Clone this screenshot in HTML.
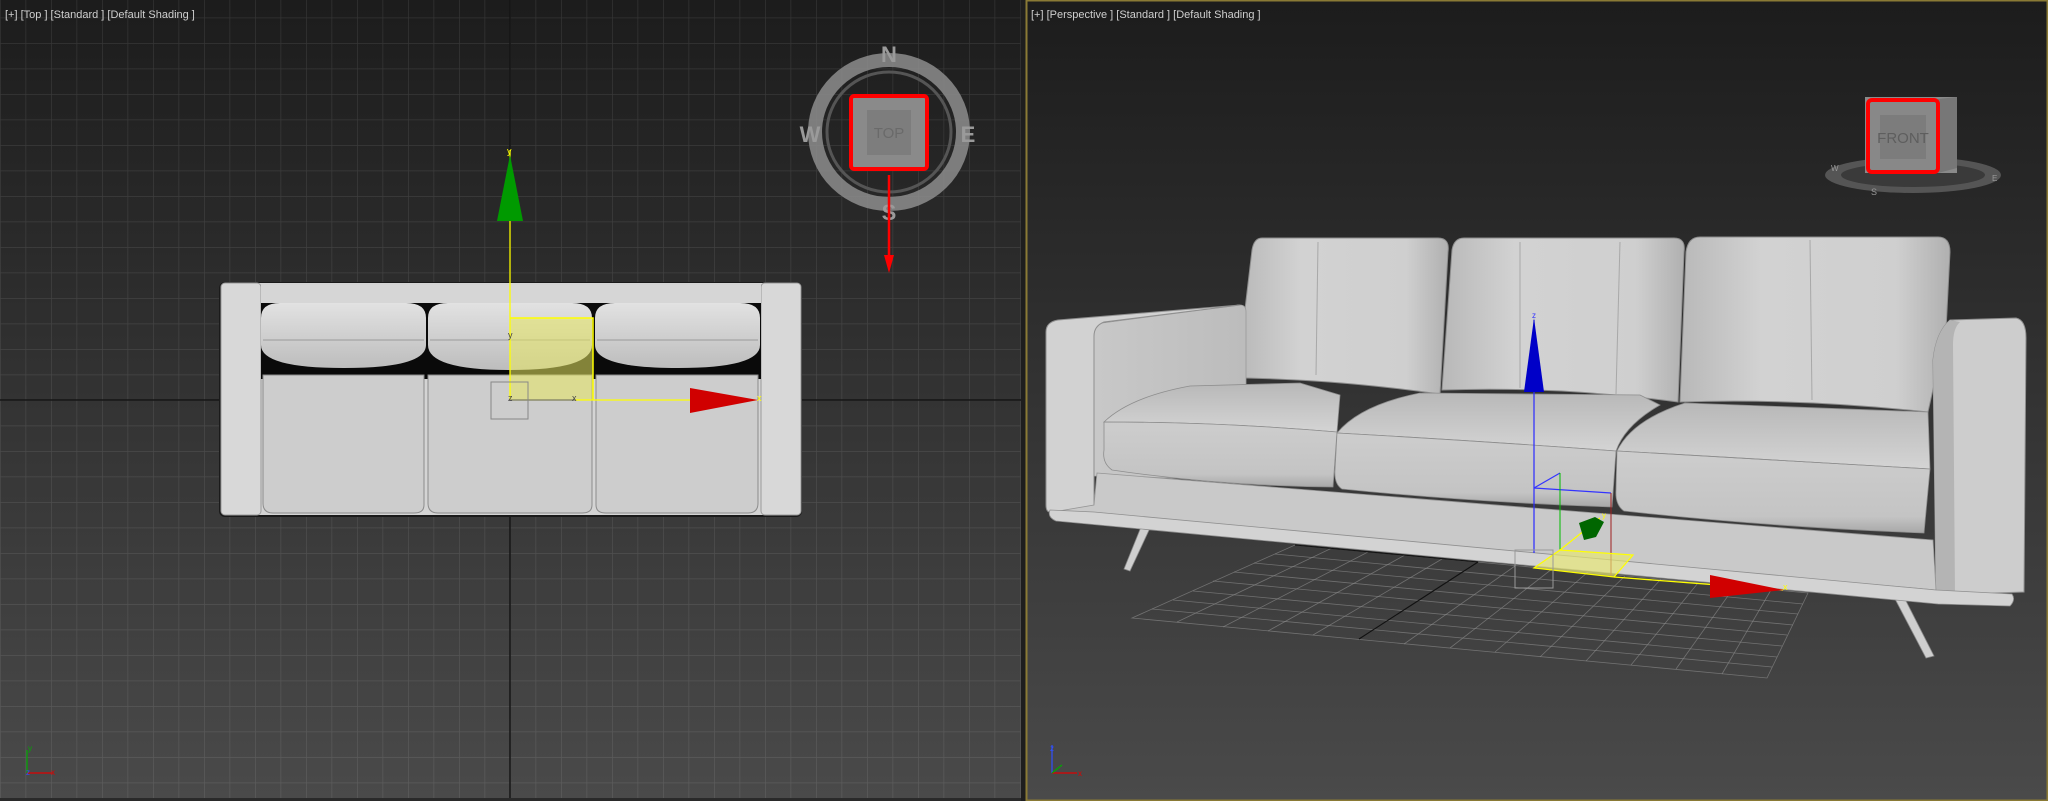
<!DOCTYPE html>
<html><head><meta charset="utf-8"><style>
html,body{margin:0;padding:0;background:#1a1a1a;width:2048px;height:801px;overflow:hidden}
svg{display:block}
text{font-family:"Liberation Sans",sans-serif}
</style></head><body>
<svg width="2048" height="801" viewBox="0 0 2048 801" xmlns="http://www.w3.org/2000/svg">
<defs>
<linearGradient id="bgL" x1="0" y1="0" x2="0" y2="1"><stop offset="0" stop-color="#1c1c1c"/><stop offset="1" stop-color="#4a4a4a"/></linearGradient>
<linearGradient id="bgR" x1="0" y1="0" x2="0" y2="1"><stop offset="0" stop-color="#1c1c1c"/><stop offset="1" stop-color="#4a4a4a"/></linearGradient>
<pattern id="grid" x="0" y="0" width="25.5" height="25.5" patternUnits="userSpaceOnUse" patternTransform="translate(510 400)">
<path d="M0 0H25.5M0 0V25.5" stroke="#ffffff" stroke-opacity="0.1" stroke-width="1.4" fill="none"/>
</pattern>
<linearGradient id="cush" x1="0" y1="0" x2="0" y2="1"><stop offset="0" stop-color="#e2e2e2"/><stop offset="1" stop-color="#bdbdbd"/></linearGradient>
<linearGradient id="cushH" x1="0" y1="0" x2="1" y2="0"><stop offset="0" stop-color="#b8b8b8"/><stop offset="0.3" stop-color="#d2d2d2"/><stop offset="0.8" stop-color="#cfcfcf"/><stop offset="1" stop-color="#b0b0b0"/></linearGradient>
<linearGradient id="seatT" x1="0" y1="0" x2="0" y2="1"><stop offset="0" stop-color="#b8b8b8"/><stop offset="1" stop-color="#d4d4d4"/></linearGradient>
<linearGradient id="seatF" x1="0" y1="0" x2="0" y2="1"><stop offset="0" stop-color="#cdcdcd"/><stop offset="0.8" stop-color="#c4c4c4"/><stop offset="1" stop-color="#a8a8a8"/></linearGradient>
<linearGradient id="armI" x1="0" y1="0" x2="1" y2="0"><stop offset="0" stop-color="#c8c8c8"/><stop offset="1" stop-color="#bcbcbc"/></linearGradient>
</defs>

<!-- LEFT VIEWPORT -->
<rect x="0" y="0" width="1021" height="801" fill="url(#bgL)"/>
<rect x="0" y="0" width="1021" height="801" fill="url(#grid)"/>
<line x1="510" y1="0" x2="510" y2="801" stroke="#151515" stroke-width="1.5"/>
<line x1="0" y1="400" x2="1021" y2="400" stroke="#151515" stroke-width="1.5"/>
<text x="5" y="18" font-size="11" fill="#cfcfcf">[+] [Top ] [Standard ] [Default Shading ]</text>

<!-- top sofa -->
<rect x="219" y="282" width="583" height="235" rx="6" fill="#1a1a1a"/>
<rect x="221" y="283" width="580" height="232" rx="5" fill="#d4d4d4"/>
<rect x="221" y="283" width="40" height="232" rx="4" fill="#d8d8d8" stroke="#9a9a9a" stroke-width="1"/>
<rect x="761" y="283" width="40" height="232" rx="4" fill="#d8d8d8" stroke="#9a9a9a" stroke-width="1"/>
<rect x="261" y="285" width="500" height="20" fill="#d6d6d6"/>
<rect x="261" y="303" width="500" height="76" fill="#0a0a0a"/>
<g fill="#cdcdcd" stroke="#8c8c8c" stroke-width="1">
<path d="M263 375 H424 V505 Q424 513 414 513 H273 Q263 513 263 503Z"/>
<path d="M428 375 H592 V505 Q592 513 582 513 H438 Q428 513 428 503Z"/>
<path d="M596 375 H758 V503 Q758 513 748 513 H606 Q596 513 596 505Z"/>
</g>
<g fill="url(#cush)">
<path d="M261 318 Q261 303 280 303 H406 Q426 303 426 318 V345 Q426 368 344 368 Q261 368 261 345Z"/>
<path d="M428 318 Q428 303 448 303 H572 Q592 303 592 318 V345 Q592 370 510 370 Q428 370 428 345Z"/>
<path d="M595 318 Q595 303 615 303 H740 Q760 303 760 318 V345 Q760 368 678 368 Q595 368 595 345Z"/>
</g>
<g stroke="#9a9a9a" stroke-width="1"><line x1="263" y1="340" x2="424" y2="340"/><line x1="430" y1="340" x2="590" y2="340"/><line x1="597" y1="340" x2="758" y2="340"/></g>

<!-- top gizmo -->
<rect x="510" y="318" width="83" height="82" fill="#e8e860" fill-opacity="0.55"/>
<path d="M510 318H593V400" stroke="#ffff00" stroke-width="1.5" fill="none"/>
<line x1="510" y1="150" x2="510" y2="400" stroke="#ffff00" stroke-width="1.3"/>
<line x1="510" y1="400" x2="755" y2="400" stroke="#ffff00" stroke-width="1.3"/>
<line x1="510" y1="400" x2="575" y2="400" stroke="#777" stroke-width="1.3"/>
<polygon points="510,155 497,221 523,221" fill="#009a00"/>
<polygon points="690,388 690,413 758,400" fill="#d00000"/>
<rect x="491" y="382" width="37" height="37" fill="none" stroke="#888" stroke-width="1"/>
<text x="507" y="154" font-size="9" fill="#ffff00">y</text>
<text x="508" y="338" font-size="9" fill="#444">y</text>
<text x="508" y="401" font-size="9" fill="#444">z</text>
<text x="572" y="401" font-size="9" fill="#444">x</text>
<text x="757" y="401" font-size="9" fill="#ffff00">x</text>

<!-- compass -->
<ellipse cx="889" cy="132" rx="74" ry="72" fill="none" stroke="#8d8d8d" stroke-width="14" stroke-opacity="0.85"/>
<ellipse cx="889" cy="132" rx="62" ry="60" fill="none" stroke="#555" stroke-width="3"/>
<text x="889" y="62" font-size="22" font-weight="bold" fill="#9a9a9a" text-anchor="middle">N</text>
<text x="810" y="142" font-size="22" font-weight="bold" fill="#9a9a9a" text-anchor="middle">W</text>
<text x="968" y="142" font-size="22" font-weight="bold" fill="#9a9a9a" text-anchor="middle">E</text>
<text x="889" y="220" font-size="22" font-weight="bold" fill="#9a9a9a" text-anchor="middle">S</text>
<rect x="851" y="96" width="76" height="73" rx="3" fill="#8a8a8a" stroke="#ff0000" stroke-width="4"/>
<rect x="867" y="110" width="44" height="45" fill="#7d7d7d"/>
<text x="889" y="138" font-size="15" fill="#6a6a6a" text-anchor="middle">TOP</text>
<line x1="889" y1="175" x2="889" y2="262" stroke="#ff0000" stroke-width="2.5"/>
<polygon points="884,255 894,255 889,273" fill="#ff0000"/>

<!-- left axis tripod -->
<line x1="27" y1="750" x2="27" y2="773" stroke="#00aa00" stroke-width="1.2"/>
<line x1="27" y1="773" x2="52" y2="773" stroke="#dd0000" stroke-width="1.2"/>
<text x="28" y="751" font-size="8" fill="#00aa00">y</text>
<text x="26" y="775" font-size="8" fill="#3050ff">z</text>
<text x="51" y="775" font-size="8" fill="#dd0000">x</text>
<rect x="0" y="798" width="1021" height="3" fill="#2a2a2a"/>

<!-- divider -->
<rect x="1021" y="0" width="5" height="801" fill="#1e1e1e"/>

<!-- RIGHT VIEWPORT -->
<rect x="1026" y="0" width="1022" height="801" fill="url(#bgR)"/>
<rect x="1026.5" y="0.5" width="1021" height="800" fill="none" stroke="#8a7a35" stroke-width="2"/>
<text x="1031" y="18" font-size="11" fill="#cfcfcf">[+] [Perspective ] [Standard ] [Default Shading ]</text>

<!-- floor grid -->
<g stroke="#8c8c8c" stroke-width="0.8" stroke-opacity="0.65" fill="none">
<polygon points="1295,545 1808,593 1767,678 1132,618"/>
<line x1="1275" y1="554" x2="1803" y2="604"/><line x1="1254" y1="563" x2="1798" y2="614"/><line x1="1234" y1="572" x2="1793" y2="625"/><line x1="1213" y1="581" x2="1787" y2="635"/><line x1="1193" y1="591" x2="1782" y2="646"/><line x1="1173" y1="600" x2="1777" y2="657"/><line x1="1152" y1="609" x2="1772" y2="667"/>
<line x1="1332" y1="548" x2="1177" y2="622"/><line x1="1368" y1="552" x2="1223" y2="627"/><line x1="1405" y1="555" x2="1268" y2="631"/><line x1="1442" y1="559" x2="1313" y2="635"/><line x1="1515" y1="566" x2="1404" y2="644"/><line x1="1552" y1="569" x2="1450" y2="648"/><line x1="1588" y1="572" x2="1495" y2="652"/><line x1="1625" y1="576" x2="1540" y2="657"/><line x1="1661" y1="579" x2="1586" y2="661"/><line x1="1698" y1="583" x2="1631" y2="665"/><line x1="1735" y1="586" x2="1676" y2="669"/><line x1="1771" y1="590" x2="1722" y2="674"/>
</g>
<line x1="1478" y1="562" x2="1359" y2="639" stroke="#111" stroke-width="1.1"/>
<line x1="1295" y1="545" x2="1478" y2="562" stroke="#111" stroke-width="1.1"/>

<!-- legs -->
<polygon points="1141,527 1150,528 1130,571 1124,569" fill="#cfcfcf" stroke="#8a8a8a" stroke-width="0.8"/>
<polygon points="1894,597 1904,597 1934,656 1926,658" fill="#cfcfcf" stroke="#8a8a8a" stroke-width="0.8"/>

<!-- back cushions -->
<path d="M1262 238 L1438 238 Q1450 238 1448 252 L1440 394 Q1340 380 1246 378 Q1236 378 1238 368 L1252 250 Q1254 238 1262 238Z" fill="url(#cushH)" stroke="#8d8d8d" stroke-width="1"/>
<path d="M1464 238 L1674 238 Q1686 238 1684 252 L1678 402 Q1560 386 1442 390 L1452 250 Q1454 238 1464 238Z" fill="url(#cushH)" stroke="#8d8d8d" stroke-width="1"/>
<path d="M1700 237 L1938 237 Q1950 237 1950 252 L1946 330 L1928 412 Q1800 398 1680 402 L1686 252 Q1688 237 1700 237Z" fill="url(#cushH)" stroke="#8d8d8d" stroke-width="1"/>
<g stroke="#a8a8a8" stroke-width="1" fill="none"><path d="M1318 242 L1316 375"/><path d="M1520 242 L1520 388"/><path d="M1620 242 L1616 394"/><path d="M1810 240 L1812 400"/></g>

<!-- left arm -->
<path d="M1094 334 Q1094 326 1102 323 L1240 305 Q1246 305 1246 312 L1246 480 L1094 476Z" fill="url(#armI)" stroke="#9a9a9a" stroke-width="0.8"/>
<path d="M1046 332 Q1046 322 1058 320 L1240 305 L1104 322 Q1094 326 1094 336 L1094 512 L1050 512 Q1046 512 1046 505Z" fill="#d2d2d2" stroke="#8f8f8f" stroke-width="1"/>
<!-- right arm -->
<path d="M1950 320 L2016 318 Q2026 320 2026 338 L2024 592 L1936 595 L1933 360 Q1936 332 1950 320Z" fill="#cdcdcd" stroke="#8f8f8f" stroke-width="1"/>
<path d="M1950 320 Q1936 332 1933 360 L1936 595 L1955 595 L1953 345 Q1953 328 1960 322Z" fill="#b4b4b4"/>

<!-- base front panel -->
<path d="M1097 473 L1933 540 L1936 590 L1053 512 L1094 505Z" fill="#c9c9c9" stroke="#959595" stroke-width="0.8"/>
<!-- plinth -->
<path d="M1050 510 L1094 512 L1936 590 L2012 594 Q2016 600 2010 606 L1938 604 L1056 521 Q1047 517 1050 510Z" fill="#d3d3d3" stroke="#8f8f8f" stroke-width="0.8"/>

<!-- seat cushions -->
<path d="M1104 422 Q1130 397 1190 386 L1300 383 L1340 395 L1337 432 Q1220 422 1104 422Z" fill="url(#seatT)" stroke="#8d8d8d" stroke-width="0.8"/>
<path d="M1104 422 Q1220 422 1337 432 L1333 487 Q1220 486 1112 470 Q1102 463 1104 450Z" fill="url(#seatF)" stroke="#8d8d8d" stroke-width="0.8"/>
<path d="M1337 433 Q1360 405 1420 393 L1640 395 L1660 405 Q1625 425 1616 451 Q1480 441 1337 433Z" fill="url(#seatT)" stroke="#8d8d8d" stroke-width="0.8"/>
<path d="M1337 433 Q1480 441 1616 451 L1612 507 Q1470 502 1342 489 Q1334 484 1335 470Z" fill="url(#seatF)" stroke="#8d8d8d" stroke-width="0.8"/>
<path d="M1617 451 Q1632 420 1685 403 L1928 412 L1930 469 Q1780 461 1617 451Z" fill="url(#seatT)" stroke="#8d8d8d" stroke-width="0.8"/>
<path d="M1617 451 Q1780 461 1930 469 L1924 533 Q1770 527 1624 511 Q1615 505 1616 490Z" fill="url(#seatF)" stroke="#8d8d8d" stroke-width="0.8"/>

<!-- perspective gizmo -->
<line x1="1534" y1="320" x2="1534" y2="553" stroke="#2a2aff" stroke-width="1.2"/>
<polygon points="1534,318 1524,392 1544,392" fill="#0000c8"/>
<path d="M1534 488 L1560 473" stroke="#3333ff" stroke-width="1.2" fill="none"/>
<path d="M1534 488 L1611 493" stroke="#3333ff" stroke-width="1.2" fill="none"/>
<line x1="1560" y1="473" x2="1560" y2="550" stroke="#00bb00" stroke-width="1"/>
<line x1="1611" y1="493" x2="1611" y2="577" stroke="#a02020" stroke-width="1"/>
<polygon points="1560,550 1633,555 1614,577 1534,568" fill="#e8e870" fill-opacity="0.65" stroke="#ffff00" stroke-width="1.2"/>
<line x1="1614" y1="577" x2="1783" y2="590" stroke="#ffff00" stroke-width="1.3"/>
<line x1="1560" y1="550" x2="1600" y2="518" stroke="#ffff00" stroke-width="1.3"/>
<polygon points="1579,523 1595,517 1604,522 1596,537 1584,540" fill="#006600"/>
<polygon points="1710,575 1710,598 1784,590" fill="#d00000"/>
<rect x="1515" y="550" width="38" height="38" fill="none" stroke="#999" stroke-width="1"/>
<text x="1783" y="590" font-size="9" fill="#ffff00">x</text>
<text x="1532" y="318" font-size="8" fill="#3333ff">z</text>
<text x="1602" y="518" font-size="8" fill="#ffff00">y</text>

<!-- view cube -->
<ellipse cx="1913" cy="175" rx="88" ry="18" fill="#6a6a6a" fill-opacity="0.7"/>
<ellipse cx="1913" cy="175" rx="72" ry="12" fill="#3a3a3a"/>
<rect x="1865" y="97" width="92" height="76" fill="#8a8a8a"/>
<polygon points="1938,99 1957,97 1957,168 1938,173" fill="#777"/>
<rect x="1868" y="100" width="70" height="72" rx="4" fill="#888" stroke="#ff0000" stroke-width="4"/>
<rect x="1880" y="115" width="46" height="44" fill="#7c7c7c"/>
<text x="1903" y="143" font-size="15" fill="#5e5e5e" text-anchor="middle">FRONT</text>
<text x="1831" y="171" font-size="8" fill="#999">W</text>
<text x="1871" y="195" font-size="9" fill="#999">S</text>
<text x="1992" y="181" font-size="8" fill="#999">E</text>

<!-- right axis tripod -->
<line x1="1052" y1="745" x2="1052" y2="773" stroke="#3050ff" stroke-width="1.2"/>
<line x1="1052" y1="773" x2="1077" y2="773" stroke="#dd0000" stroke-width="1.2"/>
<line x1="1052" y1="773" x2="1062" y2="765" stroke="#00aa00" stroke-width="1.2"/>
<text x="1050" y="751" font-size="8" fill="#3050ff">z</text>
<text x="1078" y="776" font-size="8" fill="#dd0000">x</text>
</svg>
</body></html>
